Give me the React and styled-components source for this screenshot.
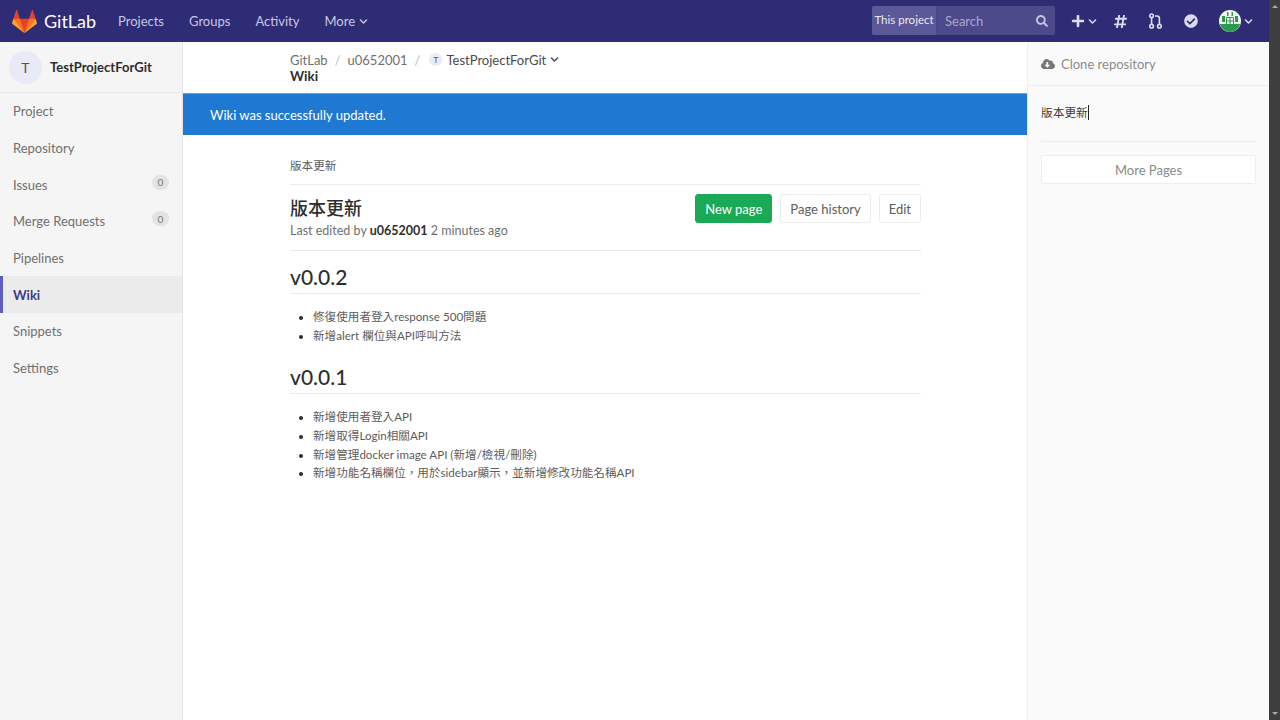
import React from 'react';
import styled, { createGlobalStyle } from 'styled-components';
import { FaPlus, FaHashtag, FaCheckCircle, FaSearch, FaCloudDownloadAlt, FaChevronDown } from 'react-icons/fa';

const Global = createGlobalStyle`
  html, body { margin: 0; padding: 0; height: 100%; background: #fff; overflow: hidden; }
  * { box-sizing: border-box; }
  body { font-family: Lato, "Noto Sans CJK TC", sans-serif; font-size: 13px; color: #2e2e2e; }
`;

const Shell = styled.div`display: flex; width: 1280px; height: 720px; overflow: hidden;`;
const Window = styled.div`flex: 1; min-width: 0; display: flex; flex-direction: column;`;
const Scrollbar = styled.div`
  width: 11px; background: #3e3e3e; display: flex; flex-direction: column; justify-content: space-between; align-items: center; padding: 5px 0;
`;
const ScrollArrow = styled.div`
  width: 0; height: 0; border-left: 3px solid transparent; border-right: 3px solid transparent;
  ${p => p.$down ? 'border-top: 3px solid #a8a8a8;' : 'border-bottom: 3px solid #a8a8a8;'}
`;

const Header = styled.header`
  height: 42px; background: #2f2c76; display: flex; align-items: center; padding-left: 12px; flex: none;
`;
const Brand = styled.div`display: flex; align-items: center; gap: 7px; color: #fff; font-size: 18px; width: 106px;`;
const Nav = styled.nav`display: flex; gap: 25px; align-items: center;`;
const NavLink = styled.span`color: #c8c6e4; font-size: 13px; display: inline-flex; align-items: center; gap: 4px;`;
const Right = styled.div`margin-left: auto; display: flex; align-items: center; height: 100%;`;
const Search = styled.div`display: flex; height: 29px; width: 183px; margin-top: -1px; margin-right: 16px; border-radius: 2px; overflow: hidden; background: #4d4a8b;`;
const Scope = styled.div`
  width: 65px; background: #5b5897; color: #e9e8f5; font-size: 11.5px; display: flex; align-items: center; justify-content: center; border-right: 1px solid #49468a; padding-bottom: 2px;
`;
const SearchInput = styled.div`
  flex: 1; display: flex; align-items: center; justify-content: space-between; padding: 0 7px 0 8px; color: #aaa8d0; font-size: 13px;
`;
const IconRow = styled.div`display: flex; align-items: center; color: #dcdbee;`;
const IconSlot = styled.span`display: inline-flex; align-items: center; gap: 3px; width: ${p => p.$w}px;`;

const Body = styled.div`flex: 1; display: flex; min-height: 0;`;
const Side = styled.aside`width: 183px; flex: none; background: #f5f5f5; border-right: 1px solid #e5e5e5;`;
const ProjectHead = styled.div`
  height: 51px; display: flex; align-items: center; gap: 8px; padding: 0 9px; border-bottom: 1px solid #e8e8e8;
`;
const Avatar = styled.div`
  width: 33px; height: 33px; border-radius: 50%; background: #e8eaf6; color: #555; display: flex; align-items: center; justify-content: center; font-size: 14px;
`;
const ProjectName = styled.div`font-weight: 700; font-size: 13px; color: #2e2e2e;`;
const SideList = styled.ul`list-style: none; margin: 0; padding: 0;`;
const SideItem = styled.li`
  height: 36.67px; display: flex; align-items: center; justify-content: space-between; padding: 0 13px 0 ${p => p.$active ? '10px' : '13px'};
  font-size: 13px; color: ${p => p.$active ? '#3c3a85' : '#707070'}; font-weight: ${p => p.$active ? 700 : 400};
  background: ${p => p.$active ? '#ebebeb' : 'transparent'};
  border-left: ${p => p.$active ? '3px solid #5f5cc0' : 'none'};
`;
const Badge = styled.span`
  width: 17px; height: 15px; border-radius: 8px; background: #e3e3e3; color: #777; font-size: 10px; display: flex; align-items: center; justify-content: center; margin-top: -5px;
`;

const Main = styled.main`flex: 1; min-width: 0; background: #fff; display: flex; flex-direction: column;`;
const Crumbs = styled.div`height: 51px; padding: 9px 106px 0 107px; flex: none;`;
const CrumbRow = styled.div`display: flex; align-items: center; color: #707070; font-size: 13px; height: 17px;`;
const Sep = styled.span`color: #bbb; margin: 0 7px;`;
const MiniAvatar = styled.span`
  width: 13px; height: 13px; border-radius: 50%; background: #e8eaf6; color: #555; font-size: 8px; display: inline-flex; align-items: center; justify-content: center; margin: 0 4px 0 2px;
`;
const CrumbProject = styled.span`display: inline-flex; align-items: center; gap: 4px; color: #4a4a4a;`;
const CrumbTitle = styled.div`font-weight: 700; font-size: 13.5px; color: #2e2e2e; line-height: 17px;`;
const Alert = styled.div`
  height: 42px; background: #1f78d1; border-top: 1px solid #5ea7ea; color: #fff; font-size: 13px; display: flex; align-items: center; padding-left: 27px; flex: none;
`;
const Content = styled.div`padding: 0 106px 0 107px;`;
const PageSlug = styled.div`height: 50px; padding-top: 22px; border-bottom: 1px solid #eee; color: #5c5c5c; font-size: 11.6px; line-height: 18px;`;
const TitleBar = styled.div`height: 66px; display: flex; justify-content: space-between; align-items: flex-start; border-bottom: 1px solid #e8e8e8; padding-top: 9px;`;
const TitleBlock = styled.div`padding-top: 4px;`;
const PageTitle = styled.h2`margin: 0; font-size: 18px; font-weight: 500; line-height: 21px; color: #2e2e2e;`;
const Edited = styled.div`margin-top: 3px; font-size: 12.5px; color: #707070; line-height: 17px; b { color: #2e2e2e; font-weight: 700; }`;
const Actions = styled.div`display: flex; gap: 8px;`;
const Button = styled.div`
  height: 29px; padding: 0 ${p => p.$pad || 9}px; display: flex; align-items: center; border-radius: 3px; font-size: 13px;
  background: ${p => p.$green ? '#1aaa55' : '#fff'}; color: ${p => p.$green ? '#fff' : '#5c5c5c'};
  border: 1px solid ${p => p.$green ? '#1aaa55' : '#ececec'};
`;
const Version = styled.h2`
  margin: ${p => p.$first ? '12px' : '18px'} 0 0; height: 31px; font-size: 21px; font-weight: 500; line-height: 27px; color: #2e2e2e; border-bottom: 1px solid #eaeaea;
`;
const Items = styled.ul`margin: 14px 0 0; padding: 0 0 0 23px; font-size: 11.6px; line-height: 18.67px; color: #5c5c5c; li::marker { color: #2e2e2e; }`;

const Rail = styled.aside`width: 242px; flex: none; background: #fafafa; border-left: 1px solid #eee; padding: 0 13px;`;
const Clone = styled.div`
  height: 44px; margin: 0 -13px; padding: 1px 13px 0; display: flex; align-items: center; gap: 6px; color: #8a8a8a; font-size: 13px; border-bottom: 1px solid #eee;
`;
const RailLink = styled.div`height: 56px; padding-top: 17px; border-bottom: 1px solid #eee; color: #3a3a3a; font-size: 11.7px; line-height: 18px; display: block;`;
const Caret = styled.span`display: inline-block; width: 1px; height: 15px; background: #222; vertical-align: -3px;`;
const MorePages = styled.div`
  margin-top: 13px; height: 29px; background: #fff; border: 1px solid #eee; border-radius: 2px; display: flex; align-items: center; justify-content: center; color: #8a8a8a; font-size: 13px;
`;

const Tanuki = () => (
  <svg width="25" height="25" viewBox="0 0 36 36">
    <path fill="#e24329" d="M2 14l9.38 9v-9l-4-12.28c-.205-.632-1.176-.632-1.38 0z" />
    <path fill="#e24329" d="M34 14l-9.38 9v-9l4-12.28c.205-.632 1.176-.632 1.38 0z" />
    <path fill="#e24329" d="M18 34.38 3 14h30z" />
    <path fill="#fc6d26" d="M18 34.38 11.38 14H2l4 11z" />
    <path fill="#fc6d26" d="M18 34.38 24.62 14H34l-4 11z" />
    <path fill="#fca326" d="M2 14L.1 20.16c-.18.565 0 1.2.5 1.56l17.42 12.66z" />
    <path fill="#fca326" d="M34 14l1.9 6.16c.18.565 0 1.2-.5 1.56L18 34.38z" />
  </svg>
);

const MergeIcon = () => (
  <svg width="13" height="16" viewBox="0 0 13 16" fill="none" stroke="#dcdbee" strokeWidth="1.6">
    <circle cx="2.6" cy="2.8" r="1.8" />
    <circle cx="2.6" cy="13.2" r="1.8" />
    <circle cx="10.4" cy="13.2" r="1.8" />
    <path d="M2.6 4.6v6.8M10.4 11.4V5.5c0-1.5-.8-2.5-2.4-2.5H6" />
  </svg>
);

const UserAvatar = () => (
  <svg width="22" height="22" viewBox="0 0 22 22">
    <circle cx="11" cy="11" r="11" fill="#f3f7f3" />
    <path fill="#2a9a4c" d="M0.8 14h20.4A11 11 0 0 1 11 22 11 11 0 0 1 .8 14z" />
    <path fill="#2a9a4c" d="M3 6h3v6H3zM16 6h3v6h-3zM8 2h1.5v4H8zM12.5 2H14v4h-1.5z" />
    <path stroke="#2a9a4c" strokeWidth="1" fill="none" d="M7.5 7.5h7v7h-7zM7.5 11h7M11 7.5v7" />
  </svg>
);

const Chevron = ({ size = 9 }) => <FaChevronDown size={size} />;

export default function App() {
  return (
    <Shell>
      <Global />
      <Window>
        <Header>
          <Brand><Tanuki />GitLab</Brand>
          <Nav>
            <NavLink>Projects</NavLink>
            <NavLink>Groups</NavLink>
            <NavLink>Activity</NavLink>
            <NavLink>More <Chevron /></NavLink>
          </Nav>
          <Right>
            <Search>
              <Scope>This project</Scope>
              <SearchInput>Search<FaSearch size={12} color="#c4c3e0" /></SearchInput>
            </Search>
            <IconRow>
              <IconSlot $w={42}><FaPlus size={14} /><Chevron /></IconSlot>
              <IconSlot $w={36}><FaHashtag size={15} /></IconSlot>
              <IconSlot $w={35}><MergeIcon /></IconSlot>
              <IconSlot $w={35}><FaCheckCircle size={14} /></IconSlot>
              <IconSlot $w={50}><UserAvatar /><Chevron /></IconSlot>
            </IconRow>
          </Right>
        </Header>
        <Body>
          <Side>
            <ProjectHead><Avatar>T</Avatar><ProjectName>TestProjectForGit</ProjectName></ProjectHead>
            <SideList>
              <SideItem>Project</SideItem>
              <SideItem>Repository</SideItem>
              <SideItem>Issues<Badge>0</Badge></SideItem>
              <SideItem>Merge Requests<Badge>0</Badge></SideItem>
              <SideItem>Pipelines</SideItem>
              <SideItem $active>Wiki</SideItem>
              <SideItem>Snippets</SideItem>
              <SideItem>Settings</SideItem>
            </SideList>
          </Side>
          <Main>
            <Crumbs>
              <CrumbRow>
                GitLab<Sep>/</Sep>u0652001<Sep>/</Sep>
                <MiniAvatar>T</MiniAvatar>
                <CrumbProject>TestProjectForGit <Chevron /></CrumbProject>
              </CrumbRow>
              <CrumbTitle>Wiki</CrumbTitle>
            </Crumbs>
            <Alert>Wiki was successfully updated.</Alert>
            <Content>
              <PageSlug>版本更新</PageSlug>
              <TitleBar>
                <TitleBlock>
                  <PageTitle>版本更新</PageTitle>
                  <Edited>Last edited by <b>u0652001</b> 2 minutes ago</Edited>
                </TitleBlock>
                <Actions>
                  <Button $green>New page</Button>
                  <Button>Page history</Button>
                  <Button>Edit</Button>
                </Actions>
              </TitleBar>
              <Version $first>v0.0.2</Version>
              <Items>
                <li>修復使用者登入response 500問題</li>
                <li>新增alert 欄位與API呼叫方法</li>
              </Items>
              <Version>v0.0.1</Version>
              <Items>
                <li>新增使用者登入API</li>
                <li>新增取得Login相關API</li>
                <li>新增管理docker image API (新增/檢視/刪除)</li>
                <li>新增功能名稱欄位，用於sidebar顯示，並新增修改功能名稱API</li>
              </Items>
            </Content>
          </Main>
          <Rail>
            <Clone><FaCloudDownloadAlt size={14} color="#777" />Clone repository</Clone>
            <RailLink>版本更新<Caret /></RailLink>
            <MorePages>More Pages</MorePages>
          </Rail>
        </Body>
      </Window>
      <Scrollbar><ScrollArrow /><ScrollArrow $down /></Scrollbar>
    </Shell>
  );
}
